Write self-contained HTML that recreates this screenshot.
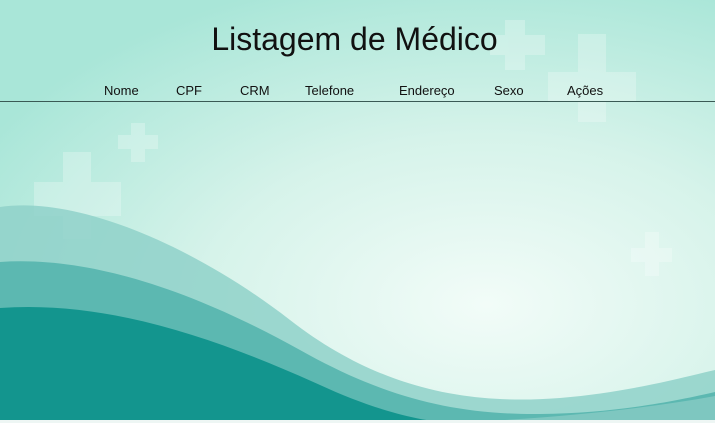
<!DOCTYPE html>
<html><head><meta charset="utf-8"><style>
html,body{margin:0;padding:0;width:715px;height:423px;overflow:hidden;font-family:"Liberation Sans",sans-serif;}
.bg{position:absolute;left:0;top:0;width:715px;height:423px;}
h1{position:absolute;left:0;width:715px;top:21px;margin:0;text-align:center;font-weight:normal;font-size:32px;color:#111;margin-left:-3px;}
.h{position:absolute;top:83px;font-size:13px;color:#111;}
.line{position:absolute;left:0;top:101px;width:715px;height:1px;background:#3a5a55;}
</style></head><body>
<svg class="bg" width="715" height="423" viewBox="0 0 715 423">
<defs>
<radialGradient id="g" cx="0.68" cy="0.72" r="0.8">
<stop offset="0" stop-color="#f2fcf8"/><stop offset="0.5" stop-color="#d6f3ea"/><stop offset="1" stop-color="#a9e6d8"/>
</radialGradient>
</defs>
<rect width="715" height="423" fill="url(#g)"/>
<g fill="#ffffff" opacity="0.25">
<path d="M505 20h20v15h20v20h-20v15h-20v-15h-15v-20h15z"/>
<path d="M578 34h28v38h30v30h-30v20h-28v-20h-30v-30h30z"/>
<path d="M118 135h13v-12h14v12h13v14h-13v13h-14v-13h-13z"/>
<path d="M63 152h28v30h30v34h-30v23h-28v-23h-29v-34h29z"/>
<path d="M645 232h14v16h13v14h-13v14h-14v-14h-14v-14h14z"/>
</g>
<path d="M0 207 C80 195 200 250 290 320 C380 390 470 405 560 398 C630 392 680 378 715 370 L715 423 L0 423Z" fill="#8fd1c9" opacity="0.85"/>
<path d="M0 262 C100 255 210 300 300 350 C380 395 450 415 540 414 C620 413 680 400 715 392 L715 423 L0 423Z" fill="#5cb8b1"/>
<path d="M0 308 C110 300 220 340 320 385 C370 408 420 423 460 423 L0 423Z" fill="#13958e"/>
<path d="M450 423 C560 418 650 408 715 396 L715 423Z" fill="#7ec7c0"/>
<rect x="0" y="420" width="715" height="3" fill="#eef6f4"/>
</svg>
<h1>Listagem de Médico</h1>
<div class="h" style="left:104px">Nome</div>
<div class="h" style="left:176px">CPF</div>
<div class="h" style="left:240px">CRM</div>
<div class="h" style="left:305px">Telefone</div>
<div class="h" style="left:399px">Endereço</div>
<div class="h" style="left:494px">Sexo</div>
<div class="h" style="left:567px">Ações</div>
<div class="line"></div>
</body></html>
